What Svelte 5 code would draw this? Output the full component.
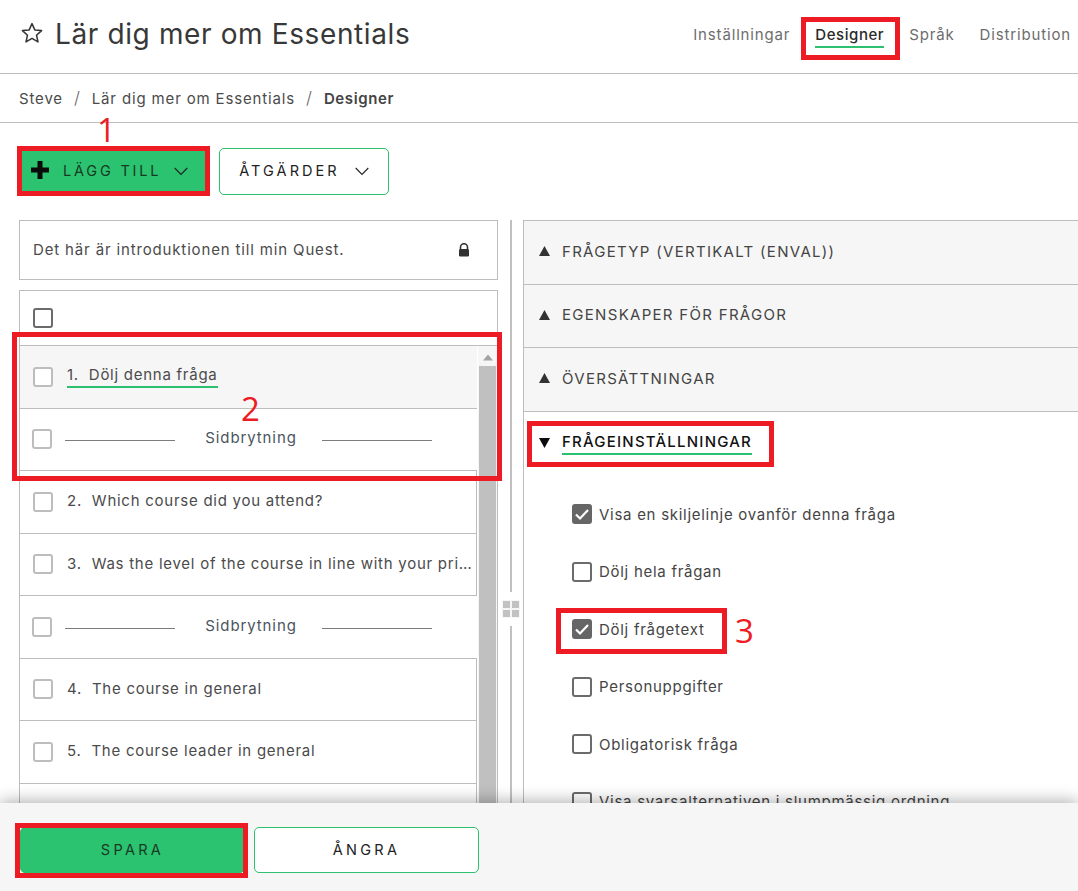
<script>
  const tabs = [
    { label: 'Inställningar' },
    { label: 'Designer', active: true },
    { label: 'Språk' },
    { label: 'Distribution' }
  ];

  const rows = [
    { text: '1.  Dölj denna fråga', selected: true },
    { pagebreak: true },
    { text: '2.  Which course did you attend?' },
    { text: '3.  Was the level of the course in line with your pri…' },
    { pagebreak: true },
    { text: '4.  The course in general' },
    { text: '5.  The course leader in general' },
    { text: '' }
  ];

  const sections = ['FRÅGETYP (VERTIKALT (ENVAL))', 'EGENSKAPER FÖR FRÅGOR', 'ÖVERSÄTTNINGAR'];

  const options = [
    { label: 'Visa en skiljelinje ovanför denna fråga', checked: true },
    { label: 'Dölj hela frågan' },
    { label: 'Dölj frågetext', checked: true },
    { label: 'Personuppgifter' },
    { label: 'Obligatorisk fråga' },
    { label: 'Visa svarsalternativen i slumpmässig ordning' }
  ];
</script>

<div class="page">
  <header class="top">
    <div class="title">
      <svg class="star" width="24" height="24" viewBox="0 0 24 24"><path d="M12 2.600l2.800 6.300 6.800.7-5.100 4.600 1.500 6.700-6-3.500-6 3.500 1.500-6.700-5.100-4.600 6.800-.7z" fill="none" stroke="#333" stroke-width="1.500" stroke-linejoin="round"/></svg>
      <h1>Lär dig mer om Essentials</h1>
    </div>
    <nav class="tabs">
      {#each tabs as tab}
        <span class="tab" class:active={tab.active}>{tab.label}</span>
      {/each}
    </nav>
  </header>

  <div class="crumbs">
    <span>Steve</span><i>/</i><span>Lär dig mer om Essentials</span><i>/</i><b>Designer</b>
  </div>

  <div class="toolbar">
    <button class="btn primary add">
      <svg class="plus" width="18" height="18" viewBox="0 0 18 18"><path d="M6.500 0h5v6.500H18v5h-6.500V18h-5v-6.500H0v-5h6.500z" fill="#0b0b0b"/></svg>
      <span>LÄGG TILL</span>
      <svg class="chev" width="14" height="9" viewBox="0 0 14 9"><path d="M.7 1L7 7.500 13.300 1" fill="none" stroke="#222" stroke-width="1.100"/></svg>
    </button>
    <button class="btn actions">
      <span>ÅTGÄRDER</span>
      <svg class="chev" width="14" height="9" viewBox="0 0 14 9"><path d="M.7 1L7 7.500 13.300 1" fill="none" stroke="#222" stroke-width="1.100"/></svg>
    </button>
  </div>

  <div class="content">
    <section class="left">
      <div class="intro">
        <span>Det här är introduktionen till min Quest.</span>
        <svg width="12" height="14" viewBox="0 0 12 14"><path d="M2.500 6V4.200a3.500 3.500 0 017 0V6" fill="none" stroke="#333" stroke-width="1.600"/><rect x="1" y="6" width="10" height="7.500" rx="1.200" fill="#333"/></svg>
      </div>

      <div class="list">
        <div class="list-head"><span class="check dark"></span></div>
        <div class="list-body">
          <div class="rows">
            {#each rows as row}
              {#if row.pagebreak}
                <div class="row pagebreak">
                  <span class="check"></span>
                  <span class="rule"></span>
                  <span class="pb-label">Sidbrytning</span>
                  <span class="rule"></span>
                </div>
              {:else}
                <div class="row" class:selected={row.selected}>
                  <span class="check"></span>
                  <span class="row-text"><span class:underlined={row.selected}>{row.text}</span></span>
                </div>
              {/if}
            {/each}
          </div>
          <div class="scrollbar">
            <svg width="12" height="7" viewBox="0 0 12 7"><path d="M6 .5l5 6H1z" fill="#a3a3a3"/></svg>
            <div class="thumb"></div>
          </div>
        </div>
      </div>
    </section>

    <div class="splitter">
      <div class="split-line top-line"></div>
      <div class="grip"><span></span><span></span><span></span><span></span></div>
      <div class="split-line"></div>
    </div>

    <section class="right">
      {#each sections as s}
        <div class="acc">
          <svg width="11" height="10" viewBox="0 0 11 10"><path d="M5.500 0L11 10H0z" fill="#333"/></svg>
          <span>{s}</span>
        </div>
      {/each}
      <div class="acc open">
        <svg width="11" height="10" viewBox="0 0 11 10"><path d="M5.500 10L0 0h11z" fill="#0b0b0b"/></svg>
        <span>FRÅGEINSTÄLLNINGAR</span>
      </div>
      <div class="options">
        {#each options as o}
          <div class="option">
            <span class="check dark" class:checked={o.checked}>
              {#if o.checked}
                <svg width="20" height="20" viewBox="0 0 20 20"><path d="M4 10.500l4 4 8-8.500" fill="none" stroke="#fff" stroke-width="2.200"/></svg>
              {/if}
            </span>
            <span>{o.label}</span>
          </div>
        {/each}
      </div>
    </section>
  </div>

  <footer class="bottom">
    <button class="btn primary save">SPARA</button>
    <button class="btn undo">ÅNGRA</button>
  </footer>

  <!-- red annotations drawn on top of the screenshot -->
  <div class="mark" style="left:801px;top:17px;width:99px;height:43px"></div>
  <div class="mark" style="left:17px;top:146px;width:193px;height:50px"></div>
  <div class="mark" style="left:12px;top:332px;width:490px;height:149px"></div>
  <div class="mark" style="left:527px;top:421px;width:247px;height:46px"></div>
  <div class="mark" style="left:556px;top:608px;width:171px;height:46px"></div>
  <div class="mark" style="left:15px;top:823px;width:233px;height:55px"></div>
  <span class="num" style="left:97px;top:108px">1</span>
  <span class="num" style="left:241px;top:387px">2</span>
  <span class="num" style="left:735px;top:609px">3</span>
</div>

<style>
  :global(body) {
    margin: 0;
    background: #fff;
  }

  .page {
    position: relative;
    width: 1078px;
    height: 891px;
    overflow: hidden;
    display: flex;
    flex-direction: column;
    font-family: "Inter", "Liberation Sans", sans-serif;
    font-size: 15px;
    letter-spacing: 0.85px;
    color: #4b4b4b;
  }

  .top {
    height: 73px;
    flex: none;
    display: flex;
    justify-content: space-between;
    border-bottom: 1px solid #bdbdbd;
  }

  .title {
    display: flex;
    align-items: center;
    gap: 11px;
    padding: 0 0 6px 20px;
  }

  .star {
    margin-top: -1px;
  }

  h1 {
    margin: 0;
    font-size: 28px;
    font-weight: 400;
    letter-spacing: 0.62px;
    color: #383838;
  }

  .tabs {
    display: flex;
    align-items: flex-start;
    padding-top: 26px;
    gap: 25px;
    margin-right: 7px;
  }

  .tab {
    line-height: 18px;
    padding-bottom: 2px;
    color: #6d6d6d;
    white-space: nowrap;
  }

  .tab.active {
    color: #2a2a2a;
    font-weight: 500;
    letter-spacing: 0.55px;
    border-bottom: 2px solid #2bc16f;
  }

  .crumbs {
    height: 48px;
    flex: none;
    display: flex;
    align-items: center;
    padding-left: 19px;
    border-bottom: 1px solid #bdbdbd;
  }

  .crumbs i {
    margin: 0 11px;
    font-style: normal;
    font-size: 17px;
    font-weight: 300;
    color: #666;
  }

  .crumbs b {
    color: #444;
    font-weight: 600;
    letter-spacing: 0.6px;
  }

  .toolbar {
    flex: none;
    display: flex;
    gap: 9px;
    padding: 25px 0 25px 20px;
  }

  .btn {
    box-sizing: border-box;
    border: 1px solid #2bc16f;
    border-radius: 5px;
    background: #fff;
    font-family: inherit;
    font-size: 14.5px;
    letter-spacing: 2.8px;
    color: #222;
    display: flex;
    align-items: center;
    justify-content: center;
    padding: 0;
  }

  .btn span {
    padding-bottom: 2px;
  }

  .btn.primary {
    background: #2bc36f;
    color: #173a25;
  }

  .add {
    width: 190px;
    height: 47px;
    justify-content: flex-start;
    padding-left: 10px;
  }

  .plus {
    margin-bottom: 3px;
  }

  .add span {
    margin-left: 14px;
  }

  .add .chev {
    margin-left: 13px;
  }

  .actions {
    width: 170px;
    height: 47px;
    gap: 15px;
    letter-spacing: 3.05px;
  }

  .content {
    flex: 1;
    min-height: 0;
    display: flex;
  }

  .left {
    width: 479px;
    margin-left: 19px;
    flex: none;
    display: flex;
    flex-direction: column;
    gap: 10px;
  }

  .intro {
    box-sizing: border-box;
    height: 60px;
    flex: none;
    border: 1px solid #bdbdbd;
    display: flex;
    align-items: center;
    justify-content: space-between;
    padding: 0 27px 1px 13px;
  }

  .list {
    flex: 1;
    min-height: 0;
    display: flex;
    flex-direction: column;
    border: 1px solid #bdbdbd;
    border-bottom: 0;
  }

  .list-head {
    height: 55px;
    flex: none;
    box-sizing: border-box;
    padding: 17px 13px 0;
    border-bottom: 1px solid #bdbdbd;
  }

  .list-body {
    flex: 1;
    min-height: 0;
    display: flex;
    overflow: hidden;
  }

  .rows {
    width: 457px;
    flex: none;
  }

  .scrollbar {
    flex: 1;
    display: flex;
    flex-direction: column;
    align-items: center;
    background: #f6f6f6;
    margin-left: 1px;
    padding-top: 8px;
    gap: 5px;
  }

  .thumb {
    flex: 1;
    width: 17px;
    background: #c0c0c0;
  }

  .row {
    box-sizing: border-box;
    height: 62.500px;
    display: flex;
    align-items: center;
    gap: 14px;
    padding-left: 13px;
    border-bottom: 1px solid #bdbdbd;
    border-right: 1px solid #bdbdbd;
    letter-spacing: 0.74px;
  }

  .row.selected {
    background: #f6f6f6;
    border-right: 0;
  }

  .row-text {
    min-width: 0;
    flex: 1;
    white-space: pre;
    padding-bottom: 2px;
  }

  .selected .row-text {
    padding-bottom: 0;
  }

  .underlined {
    display: inline-block;
    padding-bottom: 2px;
    border-bottom: 2px solid #2bc16f;
  }

  .row.pagebreak {
    border-right: 0;
    gap: 0;
    padding-left: 12px;
  }

  .rule {
    width: 110px;
    height: 1px;
    background: #7c7c7c;
    margin-top: 3px;
  }

  .rule:nth-of-type(2) {
    margin-left: 13px;
  }

  .pb-label {
    box-sizing: border-box;
    width: 147px;
    padding: 0 0 3px 5px;
    text-align: center;
    letter-spacing: 0.9px;
    color: #4b5560;
  }

  .check {
    box-sizing: border-box;
    width: 20px;
    height: 20px;
    flex: none;
    display: block;
    border: 2px solid #bdbdbd;
    border-radius: 3px;
    background: #fff;
  }

  .check.dark {
    border-color: #6b6b6b;
  }

  .check.checked {
    background: #666;
    border: 0;
  }

  .check svg {
    display: block;
  }

  .splitter {
    width: 25px;
    flex: none;
    display: flex;
    flex-direction: column;
    align-items: center;
    gap: 8px;
  }

  .split-line {
    flex: 1;
    width: 2px;
    background: #c0c0c0;
  }

  .top-line {
    flex: none;
    height: 372px;
  }

  .grip {
    display: grid;
    grid-template-columns: 7px 7px;
    gap: 2px;
    background: #f6f6f6;
    padding: 1px;
  }

  .grip span {
    height: 7px;
    background: #c2c2c2;
  }

  .right {
    flex: 1;
    min-width: 0;
    border-left: 1px solid #bdbdbd;
  }

  .acc {
    box-sizing: border-box;
    height: 63.500px;
    display: flex;
    align-items: center;
    gap: 12px;
    padding: 0 0 2px 15px;
    background: #f6f6f6;
    border-top: 1px solid #bdbdbd;
    letter-spacing: 1.3px;
    color: #444;
  }

  .acc.open {
    background: #fff;
    color: #111;
    font-weight: 500;
    letter-spacing: 1.22px;
    height: 62px;
    padding-bottom: 0;
    padding-top: 2px;
  }

  .acc.open span {
    border-bottom: 2px solid #2bc16f;
    padding-bottom: 2px;
  }

  .options {
    padding: 13px 0 0 48px;
    display: flex;
    flex-direction: column;
  }

  .option {
    height: 57.500px;
    display: flex;
    align-items: center;
    gap: 7px;
    letter-spacing: 0.72px;
    white-space: nowrap;
    color: #454545;
  }

  .bottom {
    flex: none;
    height: 88px;
    box-sizing: border-box;
    position: relative;
    display: flex;
    gap: 9px;
    padding: 24px 0 0 20px;
    background: #f6f6f6;
    box-shadow: 0 -3px 14px rgba(0, 0, 0, 0.28);
  }

  .save,
  .undo {
    width: 225px;
    height: 46px;
    letter-spacing: 3.3px;
    padding-bottom: 2px;
  }

  .mark {
    position: absolute;
    box-sizing: border-box;
    border: 5px solid #ed1c24;
  }

  .num {
    position: absolute;
    font-family: "Open Sans", sans-serif;
    font-size: 33px;
    line-height: 44px;
    color: #ed1c24;
  }
</style>
